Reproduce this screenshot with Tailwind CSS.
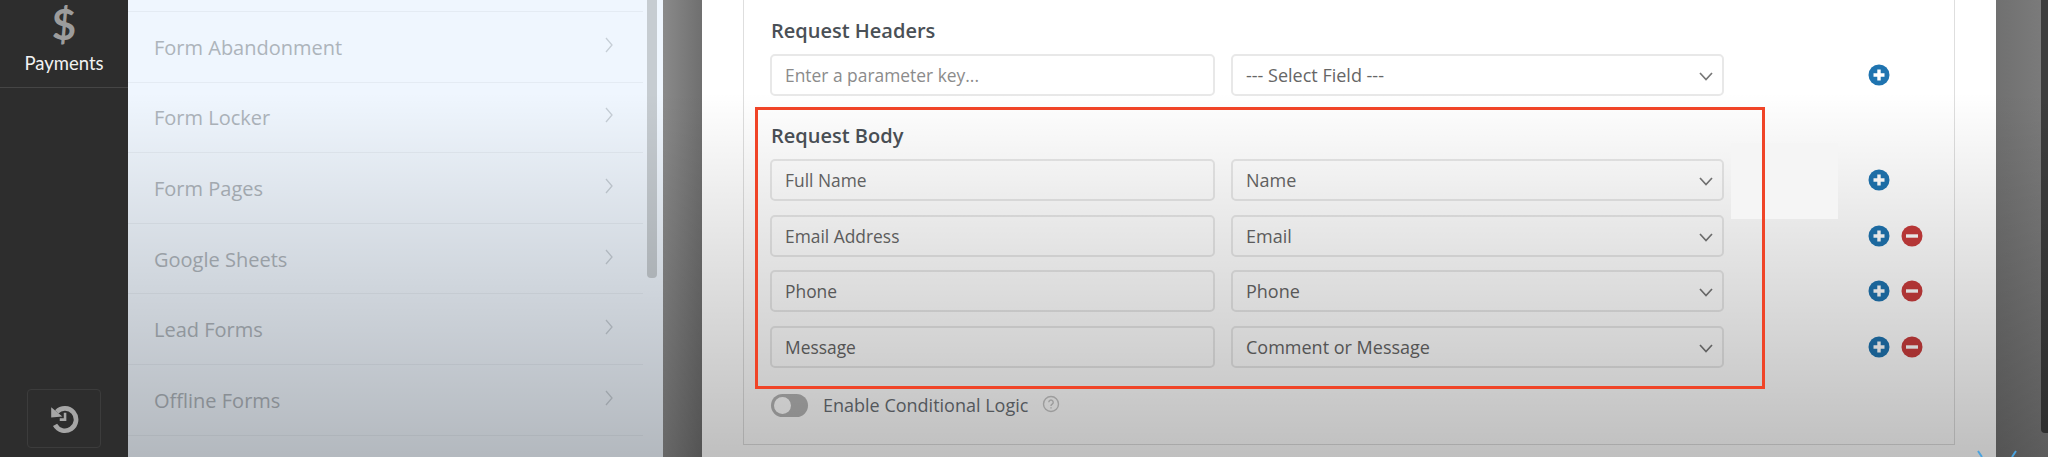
<!DOCTYPE html>
<html lang="en">
<head>
    <meta charset="UTF-8">
    <title>Request Body</title>
    <script src="https://cdn.jsdelivr.net/npm/@tailwindcss/browser@4"></script>
</head>
<body class="font-['Open_Sans',sans-serif] bg-white">
<div class="relative flex h-[457px] w-[2048px] overflow-hidden">

    <!-- Sidebar -->
    <aside class="relative w-32 shrink-0 bg-[#2d2d2d] text-white">
        <div class="flex h-[88px] flex-col items-center border-b border-[#454545] pt-[1px]">
            <span class="h-[46px] font-['Lato',sans-serif] text-[42px] leading-[46px] font-bold text-[#9c9c9c]">$</span>
            <span class="mt-[4px] font-['Lato',sans-serif] text-[18.5px] leading-6 text-[#f2f2f2]">Payments</span>
        </div>
        <button class="absolute top-[389px] left-[27px] flex h-[59px] w-[74px] items-center justify-center rounded border border-[#3c3c3c]">
            <svg width="32" height="32" viewBox="0 0 30 30" fill="none" class="mb-[2px]">
                <path d="M8.2 9.2A10.5 10.5 0 1 1 6.6 21.5" stroke="#a6a6a6" stroke-width="4.4"/>
                <path d="M3 5 L13.5 13.5 L3 14.5 Z" fill="#a6a6a6"/>
                <path d="M16 10v6.5h-5" stroke="#a6a6a6" stroke-width="2.4"/>
            </svg>
        </button>
    </aside>

    <!-- Integrations menu -->
    <nav class="relative w-[535px] shrink-0 bg-[#eff6fe] pr-5 text-[20px] text-[#adb4bb]">
        <div class="h-3 border-b border-[#e4ebf3]"></div>
        <div class="flex h-[70.6px] items-center justify-between border-b border-[#e4ebf3] pt-[2px] pr-[28px] pl-[26px]">
            <span>Form Abandonment</span>
            <svg width="12" height="18" viewBox="0 0 12 18" fill="none" class="mb-[6px]"><path d="M3 2l6 7-6 7" stroke="#c6ced6" stroke-width="1.3"/></svg>
        </div>
        <div class="flex h-[70.6px] items-center justify-between border-b border-[#e4ebf3] pt-[2px] pr-[28px] pl-[26px]">
            <span>Form Locker</span>
            <svg width="12" height="18" viewBox="0 0 12 18" fill="none" class="mb-[6px]"><path d="M3 2l6 7-6 7" stroke="#c6ced6" stroke-width="1.3"/></svg>
        </div>
        <div class="flex h-[70.6px] items-center justify-between border-b border-[#e4ebf3] pt-[2px] pr-[28px] pl-[26px]">
            <span>Form Pages</span>
            <svg width="12" height="18" viewBox="0 0 12 18" fill="none" class="mb-[6px]"><path d="M3 2l6 7-6 7" stroke="#c6ced6" stroke-width="1.3"/></svg>
        </div>
        <div class="flex h-[70.6px] items-center justify-between border-b border-[#e4ebf3] pt-[2px] pr-[28px] pl-[26px]">
            <span>Google Sheets</span>
            <svg width="12" height="18" viewBox="0 0 12 18" fill="none" class="mb-[6px]"><path d="M3 2l6 7-6 7" stroke="#c6ced6" stroke-width="1.3"/></svg>
        </div>
        <div class="flex h-[70.6px] items-center justify-between border-b border-[#e4ebf3] pt-[2px] pr-[28px] pl-[26px]">
            <span>Lead Forms</span>
            <svg width="12" height="18" viewBox="0 0 12 18" fill="none" class="mb-[6px]"><path d="M3 2l6 7-6 7" stroke="#c6ced6" stroke-width="1.3"/></svg>
        </div>
        <div class="flex h-[70.6px] items-center justify-between border-b border-[#e4ebf3] pt-[2px] pr-[28px] pl-[26px]">
            <span>Offline Forms</span>
            <svg width="12" height="18" viewBox="0 0 12 18" fill="none" class="mb-[6px]"><path d="M3 2l6 7-6 7" stroke="#c6ced6" stroke-width="1.3"/></svg>
        </div>
        <!-- scrollbar -->
        <div class="absolute top-0 right-[6px] h-[278px] w-[10px] rounded-b bg-[#c6ccd1]"></div>
    </nav>

    <div class="w-[39px] shrink-0 bg-gradient-to-r from-[#8a8a8a] to-[#6f6f6f]"></div>

    <!-- Main -->
    <main class="w-[1294px] shrink-0 bg-white pl-[41px]">
        <section class="h-[445px] w-[1212px] border-r border-b border-l border-[#dedede] pt-[19px] pl-[26px]">
            <h3 class="mb-[11px] pl-px text-[20px] leading-6 font-semibold text-[#4a5056]">Request Headers</h3>
            <div class="flex h-[42px] items-center">
                <input placeholder="Enter a parameter key..." class="h-full w-[445px] rounded-[5px] border-2 border-[#e8e8e8] bg-transparent px-[13px] text-[17.4px] text-[#666] placeholder:text-[#8b8b8b]">
                <div class="relative ml-4 h-full w-[493px]">
                    <select class="h-full w-full appearance-none rounded-[5px] border-2 border-[#e8e8e8] bg-transparent px-[13px] pt-px text-[18px] text-[#666]"><option>--- Select Field ---</option></select>
                    <svg width="16" height="12" viewBox="0 0 16 12" fill="none" class="absolute top-[16px] right-[10px]"><path d="M2 3l6 6.5L14 3" stroke="#777" stroke-width="1.7"/></svg>
                </div>
                <div class="ml-[144px] flex gap-[11px]">
                    <svg width="22" height="22" viewBox="0 0 22 22"><circle cx="11" cy="11" r="10.5" fill="#1f74b0"/><path d="M11 5.5v11M5.5 11h11" stroke="#fff" stroke-width="3.4"/></svg>
                </div>
            </div>

            <h3 class="mt-7 mb-[11px] pl-px text-[20px] leading-6 font-semibold text-[#4a5056]">Request Body</h3>
            <div class="flex flex-col gap-[13.7px]">
                <div class="flex h-[42px] items-center">
                    <input value="Full Name" class="h-full w-[445px] rounded-[5px] border-2 border-[#e8e8e8] bg-transparent px-[13px] text-[17.4px] text-[#666]">
                    <div class="relative ml-4 h-full w-[493px]">
                        <select class="h-full w-full appearance-none rounded-[5px] border-2 border-[#e8e8e8] bg-transparent px-[13px] pt-px text-[18px] text-[#666]"><option>Name</option></select>
                        <svg width="16" height="12" viewBox="0 0 16 12" fill="none" class="absolute top-[16px] right-[10px]"><path d="M2 3l6 6.5L14 3" stroke="#777" stroke-width="1.7"/></svg>
                    </div>
                    <div class="ml-[144px] flex gap-[11px]">
                        <svg width="22" height="22" viewBox="0 0 22 22"><circle cx="11" cy="11" r="10.5" fill="#1f74b0"/><path d="M11 5.5v11M5.5 11h11" stroke="#fff" stroke-width="3.4"/></svg>
                    </div>
                </div>
                <div class="flex h-[42px] items-center">
                    <input value="Email Address" class="h-full w-[445px] rounded-[5px] border-2 border-[#e8e8e8] bg-transparent px-[13px] text-[17.4px] text-[#666]">
                    <div class="relative ml-4 h-full w-[493px]">
                        <select class="h-full w-full appearance-none rounded-[5px] border-2 border-[#e8e8e8] bg-transparent px-[13px] pt-px text-[18px] text-[#666]"><option>Email</option></select>
                        <svg width="16" height="12" viewBox="0 0 16 12" fill="none" class="absolute top-[16px] right-[10px]"><path d="M2 3l6 6.5L14 3" stroke="#777" stroke-width="1.7"/></svg>
                    </div>
                    <div class="ml-[144px] flex gap-[11px]">
                        <svg width="22" height="22" viewBox="0 0 22 22"><circle cx="11" cy="11" r="10.5" fill="#1f74b0"/><path d="M11 5.5v11M5.5 11h11" stroke="#fff" stroke-width="3.4"/></svg>
                        <svg width="22" height="22" viewBox="0 0 22 22"><circle cx="11" cy="11" r="10.5" fill="#c93c3c"/><path d="M5 11h12" stroke="#fff" stroke-width="3.4"/></svg>
                    </div>
                </div>
                <div class="flex h-[42px] items-center">
                    <input value="Phone" class="h-full w-[445px] rounded-[5px] border-2 border-[#e8e8e8] bg-transparent px-[13px] text-[17.4px] text-[#666]">
                    <div class="relative ml-4 h-full w-[493px]">
                        <select class="h-full w-full appearance-none rounded-[5px] border-2 border-[#e8e8e8] bg-transparent px-[13px] pt-px text-[18px] text-[#666]"><option>Phone</option></select>
                        <svg width="16" height="12" viewBox="0 0 16 12" fill="none" class="absolute top-[16px] right-[10px]"><path d="M2 3l6 6.5L14 3" stroke="#777" stroke-width="1.7"/></svg>
                    </div>
                    <div class="ml-[144px] flex gap-[11px]">
                        <svg width="22" height="22" viewBox="0 0 22 22"><circle cx="11" cy="11" r="10.5" fill="#1f74b0"/><path d="M11 5.5v11M5.5 11h11" stroke="#fff" stroke-width="3.4"/></svg>
                        <svg width="22" height="22" viewBox="0 0 22 22"><circle cx="11" cy="11" r="10.5" fill="#c93c3c"/><path d="M5 11h12" stroke="#fff" stroke-width="3.4"/></svg>
                    </div>
                </div>
                <div class="flex h-[42px] items-center">
                    <input value="Message" class="h-full w-[445px] rounded-[5px] border-2 border-[#e8e8e8] bg-transparent px-[13px] text-[17.4px] text-[#666]">
                    <div class="relative ml-4 h-full w-[493px]">
                        <select class="h-full w-full appearance-none rounded-[5px] border-2 border-[#e8e8e8] bg-transparent px-[13px] pt-px text-[18px] text-[#666]"><option>Comment or Message</option></select>
                        <svg width="16" height="12" viewBox="0 0 16 12" fill="none" class="absolute top-[16px] right-[10px]"><path d="M2 3l6 6.5L14 3" stroke="#777" stroke-width="1.7"/></svg>
                    </div>
                    <div class="ml-[144px] flex gap-[11px]">
                        <svg width="22" height="22" viewBox="0 0 22 22"><circle cx="11" cy="11" r="10.5" fill="#1f74b0"/><path d="M11 5.5v11M5.5 11h11" stroke="#fff" stroke-width="3.4"/></svg>
                        <svg width="22" height="22" viewBox="0 0 22 22"><circle cx="11" cy="11" r="10.5" fill="#c93c3c"/><path d="M5 11h12" stroke="#fff" stroke-width="3.4"/></svg>
                    </div>
                </div>
            </div>

            <div class="mt-[26px] flex h-[23px] items-center">
                <span class="ml-px flex h-[23px] w-[37px] items-center rounded-full bg-[#b5b5b5] pl-[3px]"><span class="size-[17px] rounded-full bg-white"></span></span>
                <span class="ml-[15px] text-[18px] text-[#6a6f75]">Enable Conditional Logic</span>
                <svg width="18" height="18" viewBox="0 0 18 18" fill="none" class="mb-1 ml-[14px]"><circle cx="9" cy="9" r="7.5" stroke="#c6c6c6" stroke-width="1.4"/><path d="M6.8 7.2a2.2 2.2 0 1 1 3.4 1.9c-.8.5-1.2.9-1.2 1.8M9 12.2v1.4" stroke="#c6c6c6" stroke-width="1.4"/></svg>
            </div>
        </section>
    </main>

    <!-- Right edge of the window -->
    <div class="relative flex-1 bg-gradient-to-r from-[#707070] to-[#7c7c7c]">
        <div class="absolute top-0 right-0 h-[433px] w-[7px] rounded-bl bg-[#3d3d3d]"></div>
    </div>

    <!-- Video fade over everything right of the sidebar -->
    <div class="pointer-events-none absolute top-[92px] right-0 bottom-0 left-32 z-10 bg-gradient-to-b from-black/0 to-black/25"></div>

    <!-- Annotations on top of the fade -->
    <div class="absolute top-[143px] left-[1731px] z-20 h-[76px] w-[107px] bg-[#f5f5f5]"></div>
    <div class="absolute top-[107px] left-[755px] z-30 h-[282px] w-[1010px] border-[3.5px] border-[#f04427]"></div>
    <svg width="44" height="7" viewBox="0 0 44 7" fill="none" class="absolute top-[450px] left-[1975px] z-20"><path d="M3 1l4 6M41 1l-4 6" stroke="#4aa3df" stroke-width="2"/></svg>
</div>
</body>
</html>
